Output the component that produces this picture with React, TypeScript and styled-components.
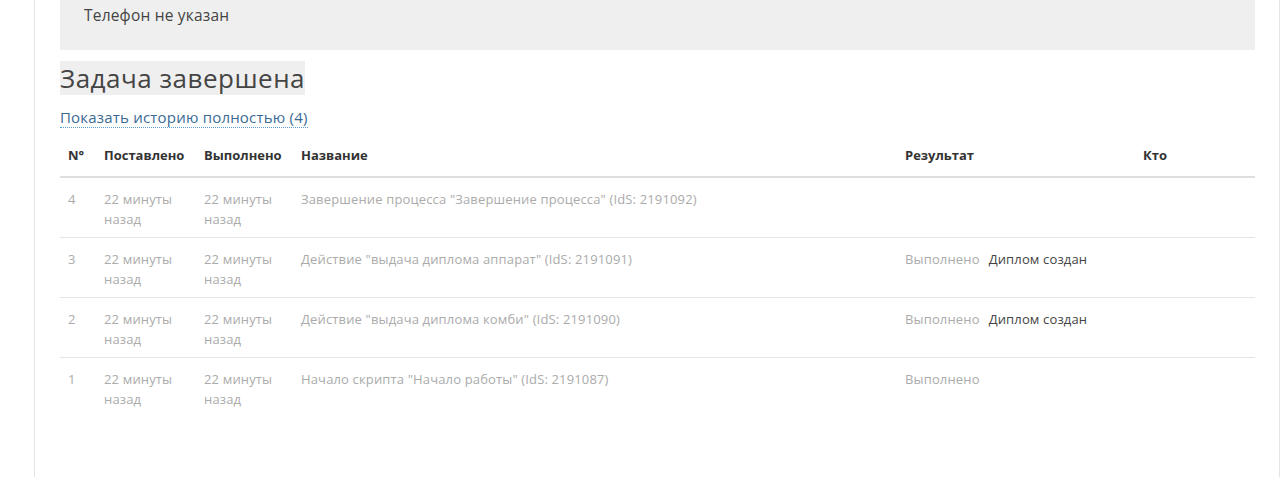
import React from "react";
import styled, { createGlobalStyle } from "styled-components";

const Global = createGlobalStyle`
  html, body { margin: 0; padding: 0; background: #fff; }
  body { font-family: "Open Sans", Lato, sans-serif; color: #333; }
`;

const Page = styled.div`
  margin-left: 34px;
  height: 477px;
  border-left: 1px solid #e3e3e3;
  border-right: 1px solid #e3e3e3;
  padding: 0 24px 0 25px;
  box-sizing: border-box;
`;

const InfoBox = styled.div`
  background: #efefef;
  padding: 5px 24px 25px;
  font-size: 15.5px;
  line-height: 20px;
  color: #444;
  letter-spacing: 0.2px;
`;

const Heading = styled.h2`
  display: inline-block;
  margin: 11px 0 0;
  background: #efefef;
  font-size: 26px;
  font-weight: 400;
  line-height: 34px;
  color: #444;
  letter-spacing: 0.5px;
`;

const LinkRow = styled.div`
  margin-top: 12px;
  line-height: 20px;
`;

const HistoryLink = styled.a`
  font-size: 15px;
  color: #3a6a94;
  text-decoration: none;
  border-bottom: 1px dotted #5b9bd0;
  cursor: pointer;
  letter-spacing: 0.2px;
`;

const Table = styled.table`
  width: 100%;
  table-layout: fixed;
  margin-top: 9px;
  border-collapse: collapse;
  font-size: 13px;
  line-height: 20px;
`;

const Col = styled.col<{ $w: number }>`
  width: ${(p) => p.$w}px;
`;

const Th = styled.th`
  text-align: left;
  font-weight: 700;
  color: #333;
  padding: 9px 8px 11px;
  border-bottom: 2px solid #dedede;
  white-space: nowrap;
`;

const Tr = styled.tr`
  & + & td { border-top: 1px solid #e5e5e5; }
`;

const Td = styled.td`
  vertical-align: top;
  padding: 11px 8px 8px;
  color: #ababab;
  letter-spacing: 0.15px;
`;

const Done = styled.span`
  color: #ababab;
  margin-right: 9px;
`;

const Comment = styled.span`
  color: #444;
`;

type Row = { n: number; name: string; result?: boolean; comment?: string };

const rows: Row[] = [
  { n: 4, name: 'Завершение процесса "Завершение процесса" (IdS: 2191092)' },
  { n: 3, name: 'Действие "выдача диплома аппарат" (IdS: 2191091)', result: true, comment: "Диплом создан" },
  { n: 2, name: 'Действие "выдача диплома комби" (IdS: 2191090)', result: true, comment: "Диплом создан" },
  { n: 1, name: 'Начало скрипта "Начало работы" (IdS: 2191087)', result: true },
];

export default function App() {
  return (
    <>
      <Global />
      <Page>
        <InfoBox>Телефон не указан</InfoBox>
        <Heading>Задача завершена</Heading>
        <LinkRow>
          <HistoryLink>Показать историю полностью (4)</HistoryLink>
        </LinkRow>
        <Table>
          <colgroup>
            <Col $w={36} />
            <Col $w={100} />
            <Col $w={97} />
            <Col $w={604} />
            <Col $w={238} />
            <Col $w={120} />
          </colgroup>
          <thead>
            <tr>
              <Th>N°</Th>
              <Th>Поставлено</Th>
              <Th>Выполнено</Th>
              <Th>Название</Th>
              <Th>Результат</Th>
              <Th>Кто</Th>
            </tr>
          </thead>
          <tbody>
            {rows.map((r) => (
              <Tr key={r.n}>
                <Td>{r.n}</Td>
                <Td>22 минуты<br />назад</Td>
                <Td>22 минуты<br />назад</Td>
                <Td>{r.name}</Td>
                <Td>
                  {r.result && <Done>Выполнено</Done>}
                  {r.comment && <Comment>{r.comment}</Comment>}
                </Td>
                <Td />
              </Tr>
            ))}
          </tbody>
        </Table>
      </Page>
    </>
  );
}
